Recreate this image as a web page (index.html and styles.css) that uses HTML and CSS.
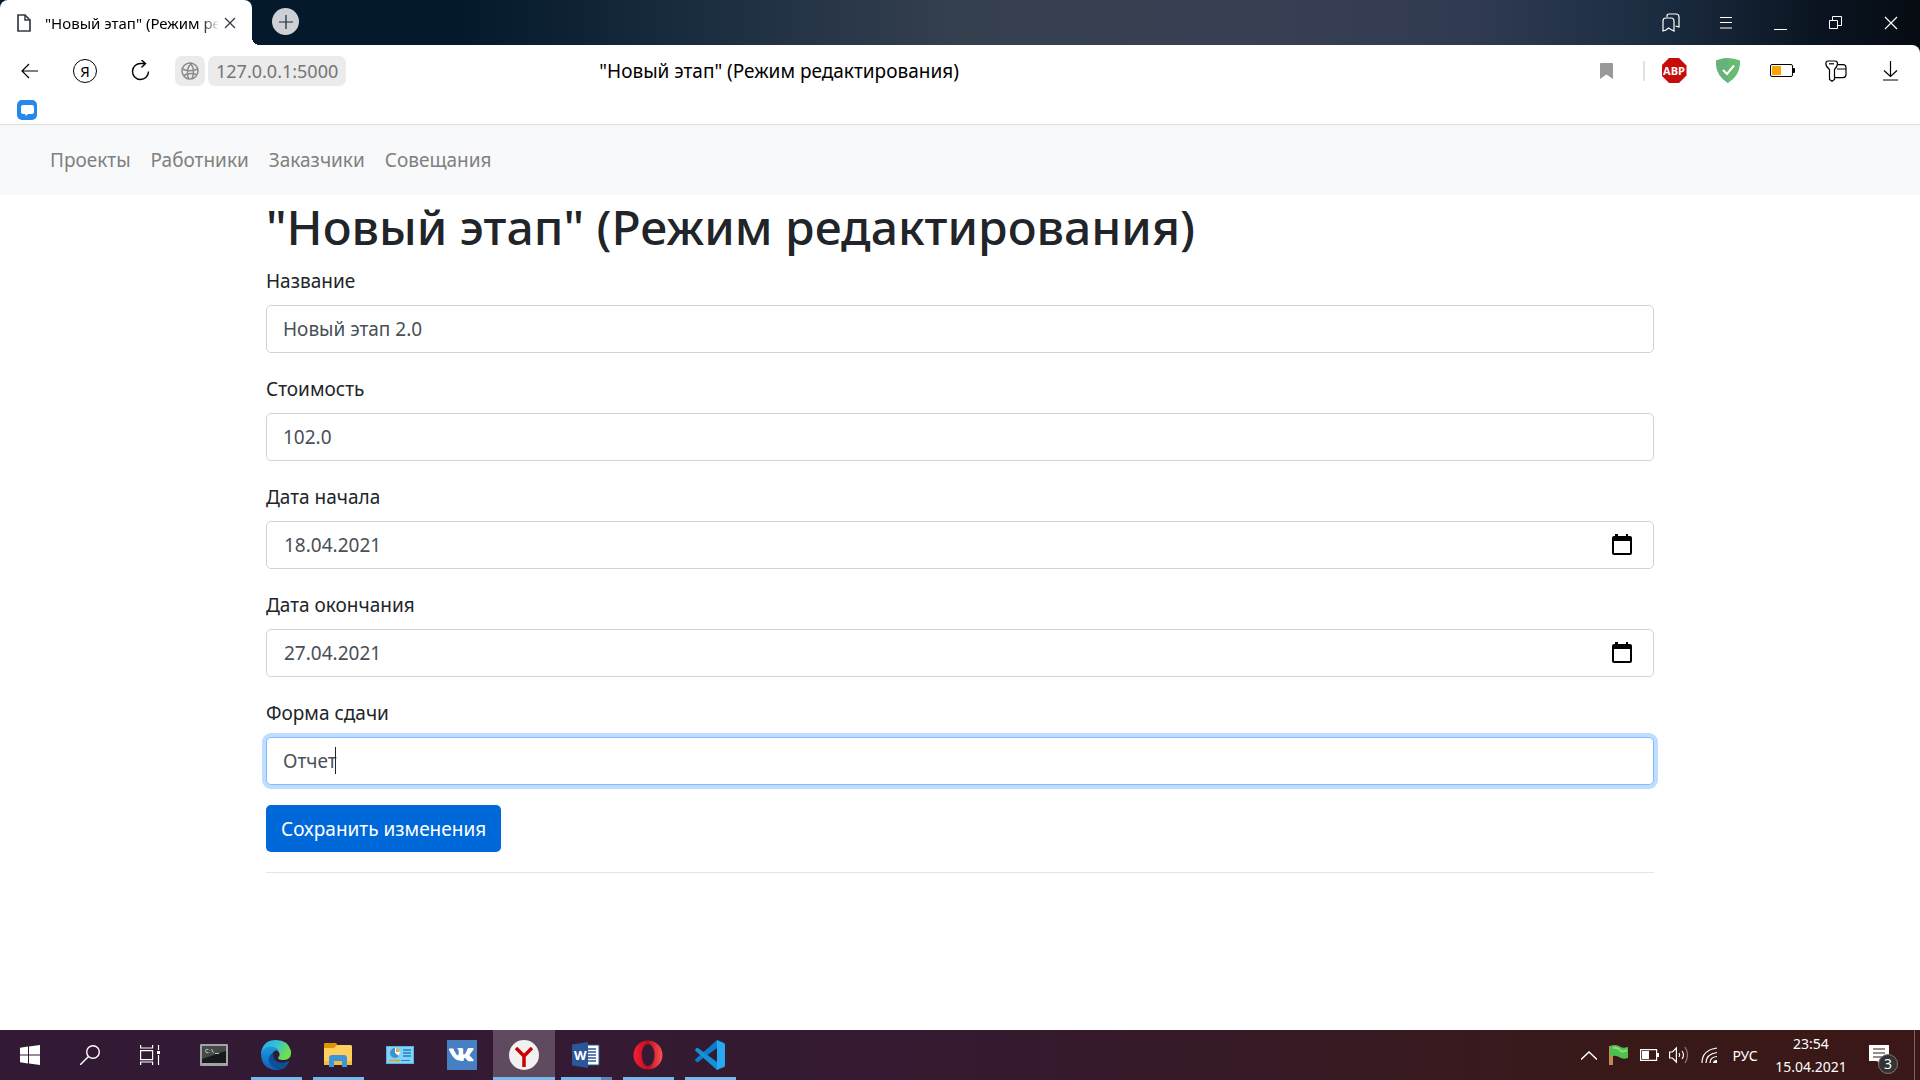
FILE: index.html
```html
<!DOCTYPE html>
<html lang="ru">
<head>
<meta charset="utf-8">
<title>"Новый этап" (Режим редактирования)</title>
<link rel="stylesheet" href="styles.css">
</head>
<body>
<header class="chrome">
  <div class="tabstrip">
    <div class="tab">
      <svg width="16" height="20" viewBox="0 0 16 20" fill="none" stroke="#343a4a" stroke-width="1.700"><path d="M2 2h7l5 5v11H2z"/><path d="M9 2v5h5" stroke-width="1.5"/></svg>
      <span class="tab-title">"Новый этап" (Режим редактирования)</span>
      <button class="icon-btn tab-close" aria-label="Закрыть вкладку"><svg width="12" height="12" viewBox="0 0 12 12" stroke="#333a48" stroke-width="1.3"><path d="M1 1l10 10M11 1L1 11"/></svg></button>
    </div>
    <span class="tab-corner"></span>
    <button class="icon-btn new-tab" aria-label="Новая вкладка"><svg width="14" height="14" viewBox="0 0 14 14" stroke="#1d2730" stroke-width="1.2"><path d="M7 0v14M0 7h14"/></svg></button>
    <div class="window-controls">
      <button class="icon-btn" aria-label="Коллекции"><svg width="18" height="20" viewBox="0 0 18 20" fill="none" stroke="#fff" stroke-width="1.2"><path d="M1 18V8q0-3 3-3h5q3 0 3 3v10l-3-1.500L6.500 15 4 17z"/><path d="M5 4V3q0-2 2-2h7q3 0 3 3v10l-3.500-1"/></svg></button>
      <button class="icon-btn" aria-label="Меню"><svg width="12" height="12" viewBox="0 0 12 12" stroke="#fff"><path d="M0 .5h12M0 5.500h12M0 11h12"/></svg></button>
      <button class="icon-btn" aria-label="Свернуть"><svg width="13" height="14" viewBox="0 0 13 14" stroke="#fff"><path d="M0 13.500h13"/></svg></button>
      <button class="icon-btn" aria-label="Восстановить"><svg width="13" height="13" viewBox="0 0 13 13" fill="none" stroke="#fff"><path d="M.5 4.500h8v8h-8zM3.500 4.500v-4h9v9h-4"/></svg></button>
      <button class="icon-btn" aria-label="Закрыть"><svg width="14" height="14" viewBox="0 0 14 14" stroke="#fff" stroke-width="1.2"><path d="M1 1l12 12M13 1L1 13"/></svg></button>
    </div>
  </div>
  <div class="panel">
    <div class="toolbar">
      <button class="icon-btn nav-btn" aria-label="Назад"><svg width="17" height="16" viewBox="0 0 17 16" fill="none" stroke="#000" stroke-width="1.2"><path d="M17 8H1M8 1L1 8l7 7"/></svg></button>
      <button class="icon-btn nav-btn" aria-label="Яндекс"><span class="ya-ring">Я</span></button>
      <button class="icon-btn nav-btn" aria-label="Обновить"><svg width="20" height="22" viewBox="0 0 20 22" fill="none" stroke="#000" stroke-width="1.4"><path d="M17.500 11.500a8 8 0 1 1-7.500-8h4M10.500 0l4 3.500-4 4"/></svg></button>
      <button class="icon-btn site" aria-label="О сайте"><svg width="18" height="18" viewBox="0 0 18 18" fill="none" stroke="#8a8a8a" stroke-width="1.500"><circle cx="9" cy="9" r="8"/><path d="M1.500 7q7 3.500 15.500 0M2.500 13.500q6-3.500 13-1M11 1Q4 6 7.500 17M9 1q6 6 2 16"/></svg></button>
      <span class="url">127.0.0.1:5000</span>
      <span class="page-title">"Новый этап" (Режим редактирования)</span>
      <button class="icon-btn mark" aria-label="В закладки"><svg width="13" height="16" viewBox="0 0 13 16" fill="#999"><path d="M1 0h11q1 0 1 1v15l-6.500-4.500L0 16V1q0-1 1-1z"/></svg></button>
      <div class="extensions">
        <button class="icon-btn" aria-label="Adblock Plus"><span class="abp">ABP</span></button>
        <button class="icon-btn" aria-label="Защита"><svg width="24" height="25" viewBox="0 0 24 25"><path d="M12 0q6 0 12 2.500Q25 17 12 25-1 17 0 2.500 6 0 12 0z" fill="#68bc71"/><path d="M12 0v25Q-1 17 0 2.500 6 0 12 0z" fill="#67b279"/><path d="M7 12l4 4 7-8.500" fill="none" stroke="#fff" stroke-width="2"/></svg></button>
        <button class="icon-btn" aria-label="Батарея"><svg width="25" height="13" viewBox="0 0 25 13"><rect x=".5" y=".5" width="22" height="12" rx="1.500" fill="none" stroke="#000"/><path d="M23 4h1q1 0 1 1v3q0 1-1 1h-1z"/><path d="M2 2h9v9H2z" fill="#ffa200"/></svg></button>
        <button class="icon-btn" aria-label="Пароли"><svg width="22" height="22" viewBox="0 0 22 22" fill="none" stroke="#000" stroke-width="1.200"><path d="M12 4.600h6q3 0 3 3v7q0 3-3 3h-8M12 9h9"/><path d="M3 1h7q2.500 0 2.500 2.500 0 3-3 6V19.500L7 21.300l-2.500-1.800V9.500Q1 7 .8 3.500 1 1 3 1z" fill="#fff"/><path d="M4 3.800h5"/></svg></button>
        <button class="icon-btn" aria-label="Загрузки"><svg width="15" height="20" viewBox="0 0 15 20" fill="none" stroke="#000" stroke-width="1.200"><path d="M7.500 0v15.500M1 9.500l6.500 6 6.500-6M0 19h15"/></svg></button>
      </div>
    </div>
    <div class="bookmarks">
      <a href="#" aria-label="Чат"><svg width="20" height="20" viewBox="0 0 20 20"><rect width="20" height="20" rx="5" fill="#2688eb"/><path d="M6 5h9q2 0 2 2v5q0 2-2 2h-4l-2.500 2.300V14H6q-2 0-2-2V7q0-2 2-2z" fill="#fff"/></svg></a>
    </div>
  </div>
</header>

<nav class="site-nav">
  <a href="#">Проекты</a>
  <a href="#">Работники</a>
  <a href="#">Заказчики</a>
  <a href="#">Совещания</a>
</nav>

<main class="container">
  <h1>"Новый этап" (Режим редактирования)</h1>
  <form>
    <div class="group">
      <label for="name">Название</label>
      <input class="control" id="name" type="text" value="Новый этап 2.0">
    </div>
    <div class="group">
      <label for="cost">Стоимость</label>
      <input class="control" id="cost" type="text" value="102.0">
    </div>
    <div class="group">
      <label for="start">Дата начала</label>
      <div class="control date">
        <input id="start" type="text" value="18.04.2021">
        <button class="icon-btn" type="button" aria-label="Выбрать дату начала"><svg width="20" height="22" viewBox="0 0 20 22"><path d="M3 0h3v2h8V0h2v2h2q2 0 2 2v15q0 2-2 2H2q-2 0-2-2V4q0-2 2-2h1zM2 7v12h16V7z"/></svg></button>
      </div>
    </div>
    <div class="group">
      <label for="end">Дата окончания</label>
      <div class="control date">
        <input id="end" type="text" value="27.04.2021">
        <button class="icon-btn" type="button" aria-label="Выбрать дату окончания"><svg width="20" height="22" viewBox="0 0 20 22"><path d="M3 0h3v2h8V0h2v2h2q2 0 2 2v15q0 2-2 2H2q-2 0-2-2V4q0-2 2-2h1zM2 7v12h16V7z"/></svg></button>
      </div>
    </div>
    <div class="group">
      <label for="form">Форма сдачи</label>
      <div class="caret-field">
        <input class="control active" id="form" type="text" value="Отчет">
        <span class="caret"></span>
      </div>
    </div>
    <button class="submit" type="submit">Сохранить изменения</button>
  </form>
  <hr>
</main>

<footer class="taskbar">
  <button class="icon-btn sys" aria-label="Пуск"><svg width="20" height="20" viewBox="0 0 20 20" fill="#fff"><path d="M0 2.800L8 1.600V9.500H0zM9 1.500L20 0v9.500H9zM0 10.500h8v7.900l-8-1.200zM9 10.500h11V20L9 18.500z"/></svg></button>
  <button class="icon-btn sys" aria-label="Поиск"><svg width="20" height="20" viewBox="0 0 20 20" fill="none" stroke="#fff" stroke-width="1.400"><circle cx="13" cy="7" r="6.300"/><path d="M8.500 11.500L0 20"/></svg></button>
  <button class="icon-btn sys tasks" aria-label="Представление задач"><svg width="20" height="20" viewBox="0 0 20 20" fill="none" stroke="#fff" stroke-width="1.200"><path d="M.6 0v3h12V0M.6 5.600h12v9H.6zM.6 20v-3h12v3M18.500 0v5M18.500 10v10"/><path d="M17 6h3v3h-3z" fill="#fff" stroke="none"/></svg></button>
  <button class="icon-btn app" aria-label="Командная строка"><svg width="28" height="22" viewBox="0 0 28 22"><rect width="28" height="22" rx="1" fill="#a3a3a3"/><path d="M2 2h24v17H2z" fill="#161819"/><path d="M2 2h24v5L2 15z" fill="#45494b"/><path d="M8.500 5.500q-3-1-3 1.500t3 1.500M10 6v.5M10 8v.5M11.500 5l2 4M15 9.500h4" fill="none" stroke="#bbb"/><path d="M22 20h2" stroke="#4ae"/></svg></button>
  <button class="icon-btn app open" aria-label="Microsoft Edge"><svg width="30" height="30" viewBox="0 0 30 30">
    <defs><linearGradient id="eg" x1="0" y1="0" x2="1" y2=".4"><stop offset="0" stop-color="#2aa9e0"/><stop offset=".5" stop-color="#34c1da"/><stop offset="1" stop-color="#6ee04e"/></linearGradient><linearGradient id="eb" x1="0" y1="0" x2="0" y2="1"><stop offset="0" stop-color="#1c9be0"/><stop offset="1" stop-color="#0f5fb5"/></linearGradient></defs>
    <path d="M0 13Q2 0 15 0q12 0 15 11 1 9-8 9-5 0-5-2.500 2-1.500 1.500-4Q17 9 11 8 4 8 0 15z" fill="url(#eg)"/>
    <path d="M0 13Q3 6 10 6.500q6 .5 8 4-4-1-6 2-3 7 3 11 6 3 13-2-4 9-13 8.500Q0 29 0 13z" fill="url(#eb)"/>
    <path d="M12.500 12Q4 18 10 25q3 4 7 4.800 7-1 11-8.300.3-1-1-.6Q18 25 14 20q-3-4-1.500-8z" fill="#0c4f9a"/></svg></button>
  <button class="icon-btn app open" aria-label="Проводник"><svg width="28" height="24" viewBox="0 0 28 24"><path d="M1 0h11l2 3v7H0V1q0-1 1-1z" fill="#dd9500"/><path d="M0 5h10l3-3h14l1 1v19H0z" fill="#ffd15c"/><path d="M0 18h28v4H0z" fill="#f5bd3d"/><path d="M5 24V15q0-3 3-3h12q3 0 3 3v9h-5v-6h-8v6z" fill="#3d96dc"/></svg></button>
  <button class="icon-btn app" aria-label="Панель управления"><svg width="28" height="18" viewBox="0 0 28 18"><path d="M0 0h28v18H0z" fill="#55b4e8"/><path d="M1 1h26v16H1z" fill="#83d3f7"/><circle cx="9" cy="7" r="5" fill="#3d91d2"/><path d="M9 7V2a5 5 0 0 1 4 8z" fill="#fff"/><path d="M10 6V2.500A4 4 0 0 1 13.500 6z" fill="#f6a82c"/><path d="M17 4h8M17 7h8M17 10h8" stroke="#2382c5" stroke-width="1.500"/><path d="M3 14.500h11" stroke="#f39c12" stroke-width="1.500"/><path d="M15 14.500h9" stroke="#2382c5"/></svg></button>
  <button class="icon-btn app" aria-label="ВКонтакте"><svg width="30" height="30" viewBox="0 0 30 30"><path d="M0 0h30v30H0z" fill="#4680c2"/><path d="M14.600 21h1.300s.4 0 .6-.3c.2-.2.200-.5.200-.5s0-2 .9-2.200c.9-.3 2 1.900 3.200 2.700.9.600 1.600.5 1.600.5h3.200s1.700-.1.900-1.400c-.1-.1-.5-1-2.500-2.800-2.100-1.900-1.800-1.600.7-4.900 1.500-2 2.100-3.200 1.900-3.700-.2-.5-1.300-.4-1.300-.4l-3.600.1s-.5-.1-.7.200c-.2.200-.5.800-.5.800s-.6 1.500-1.300 2.800c-1.600 2.700-2.200 2.800-2.500 2.700-.6-.4-.5-1.600-.5-2.400 0-2.700.4-3.800-.8-4-.4-.1-.7-.2-1.700-.2-1.300 0-2.400 0-3 .3-.4.200-.8.700-.6.700.3 0 .9.200 1.200.6.4.6.4 1.800.4 1.800s.2 3.500-.6 3.900c-.5.300-1.300-.3-2.900-3-.8-1.400-1.400-2.900-1.400-2.900L6.300 8.600H2.500s-.9.100-.5 1.100c0 0 2.900 6.300 5.700 8.900 3 2.600 6.900 2.400 6.900 2.400z" fill="#fff"/></svg></button>
  <button class="icon-btn app current" aria-label="Яндекс.Браузер"><svg width="30" height="30" viewBox="0 0 30 30"><circle cx="15" cy="15" r="15" fill="#f1f1f1"/><path d="M7 8l8 8v11M15 16l8-8" fill="none" stroke="#c00" stroke-width="3.500"/></svg></button>
  <button class="icon-btn app open stacked" aria-label="Word"><svg width="28" height="28" viewBox="0 0 28 28"><path d="M15 4h12v20H15z" fill="#fff" stroke="#2b579a"/><path d="M16 8h8M16 11h8M16 14h8M16 17h8M16 20h8" stroke="#2b579a" stroke-width="1.400"/><path d="M0 3.500L16 1v26L0 24.500z" fill="#2b579a"/><text x="2" y="19" class="word-mark">W</text></svg></button>
  <button class="icon-btn app open" aria-label="Opera"><svg width="30" height="30" viewBox="0 0 30 30"><defs><linearGradient id="op" x1="0" x2="1"><stop offset="0" stop-color="#fa1e35"/><stop offset=".5" stop-color="#b80f22"/><stop offset="1" stop-color="#ff5350"/></linearGradient></defs><path fill-rule="evenodd" fill="url(#op)" d="M15 .5a14.500 14.500 0 1 1 0 29 14.500 14.500 0 1 1 0-29zM15 4c-4 0-6.200 5-6.200 11S11 26 15 26s6.500-5 6.500-11S19 4 15 4z"/></svg></button>
  <button class="icon-btn app open" aria-label="Visual Studio Code"><svg width="30" height="30" viewBox="0 0 30 30"><path d="M22 8L3 22q-.8.500-1.500 0L.3 20.600q-.6-.8 0-1.400L22 0z" fill="#0b7ec9"/><path d="M22 22L3 8q-.8-.5-1.500 0L.3 9.400q-.6.800 0 1.400L22 30z" fill="#1390d8"/><path d="M22 0l7 3q1 .6 1 1.500v21q0 1-1 1.500l-7 3z" fill="#29a8f2"/></svg></button>

  <div class="tray">
    <button class="icon-btn" aria-label="Скрытые значки"><svg width="16" height="9" viewBox="0 0 16 9" fill="none" stroke="#fff" stroke-width="1.500"><path d="M0 8.500l8-7.500 8 7.500"/></svg></button>
    <button class="icon-btn" aria-label="Флаг"><svg width="20" height="20" viewBox="0 0 20 20"><path d="M0 1h4v19H0z" fill="#c08a50"/><path d="M1 1q5-2 9 0 3 3 9 1v11q-5 2-9-1-4-2-6-1H1z" fill="#4fc04f"/><path d="M4 3q5-1 7 2t7 0" stroke="#8ae07e" stroke-width="2" fill="none"/></svg></button>
    <button class="icon-btn" aria-label="Заряд"><svg width="19" height="12" viewBox="0 0 19 12"><path d="M.6.600h16v10.800H.6z" fill="none" stroke="#fff" stroke-width="1.200"/><path d="M2 2h7v8H2zM17 4h2v4h-2z" fill="#fff"/></svg></button>
    <button class="icon-btn" aria-label="Громкость"><svg width="20" height="18" viewBox="0 0 20 18" fill="none" stroke="#fff" stroke-width="1.200"><path d="M.6 6h2.800l4-4v14l-4-4H.6z"/><path d="M10 7q1.500 2 0 4M13 5q3 4 0 8"/><path d="M16 1q5 8 0 16" stroke="#937c7d"/></svg></button>
    <button class="icon-btn" aria-label="Сеть"><svg width="17" height="17" viewBox="0 0 17 17" fill="none" stroke="#fff" stroke-width="1.200"><path d="M1 16Q1 3 16 1M5 16Q5 7 16 5.500M9 16q0-6 7-6.500" /><path d="M12 16q0-3 4-3v3z" fill="#fff" stroke="none"/></svg></button>
    <button class="icon-btn lang">РУС</button>
    <button class="icon-btn clock"><span>23:54</span><span>15.04.2021</span></button>
    <button class="icon-btn notes" aria-label="Уведомления: 3"><svg width="20" height="21" viewBox="0 0 20 21"><path d="M0 0h20v16h-7v5l-5-5H0z" fill="#fff"/><path d="M4 4h12M4 8h12M4 12h12" stroke="#391b1b" stroke-width="1.200"/></svg><span class="badge">3</span></button>
    <span class="desktop-edge"></span>
  </div>
</footer>
</body>
</html>
```
FILE: styles.css
```css
* { box-sizing: border-box; }

body {
  margin: 0;
  min-height: 100vh;
  display: flex;
  flex-direction: column;
  background: #fff;
  color: #212529;
  font-family: "Noto Sans", "Open Sans", sans-serif;
  font-size: 19px;
  line-height: 30px;
}

button, input { font: inherit; }

.icon-btn {
  display: flex;
  align-items: center;
  justify-content: center;
  padding: 0;
  border: 0;
  background: none;
  color: inherit;
  flex: none;
}

svg { display: block; flex: none; }

/* Browser window */
.chrome {
  background: linear-gradient(90deg, #04192b 0, #04192b 24%, #1a2c40 36%, #35404f 50%, #3a4054 65%, #2f3a52 77%, #1c2d42 86%, #0a1420 95%, #060b12 100%);
}

.tabstrip { display: flex; align-items: center; height: 45px; }

.tab {
  align-self: stretch;
  display: flex;
  align-items: center;
  width: 252px;
  padding: 0 16px;
  background: #fff;
  border-radius: 8px 8px 0 0;
}

.tab-title {
  flex: 1;
  margin-left: 13px;
  overflow: hidden;
  white-space: nowrap;
  color: #000;
  font-size: 15px;
  mask-image: linear-gradient(90deg, #000 90%, transparent);
}

.tab-close { margin-left: 5px; }

.tab-corner {
  align-self: flex-end;
  width: 8px;
  height: 8px;
  background: radial-gradient(circle at 100% 0, transparent 8px, #fff 8px);
}

.new-tab {
  width: 27px;
  height: 27px;
  margin: 0 0 2px 12px;
  border-radius: 50%;
  background: #cdd1d5;
}

.window-controls { display: flex; margin-left: auto; padding-right: 2px; }
.window-controls .icon-btn { width: 55px; height: 45px; }

.panel {
  background: #fff;
  border-bottom: 1px solid #dcdcdc;
  border-radius: 0 8px 0 0;
}

.toolbar { display: flex; align-items: center; height: 51px; padding-left: 1px; color: #000; }

.nav-btn { width: 56px; height: 40px; }

.ya-ring {
  width: 24px;
  height: 24px;
  border: 1px solid #000;
  border-radius: 50%;
  font-size: 15px;
  line-height: 22px;
}

.site { width: 30px; height: 30px; margin-left: 6px; border-radius: 7px; background: #ebebeb; }

.url {
  margin-left: 3px;
  padding: 0 8px;
  border-radius: 7px;
  background: #ebebeb;
  color: #757575;
  font-size: 18px;
}

.page-title { flex: 1; padding-left: 253px; white-space: nowrap; }

.mark { width: 40px; height: 40px; margin-right: 17px; }

.extensions {
  display: flex;
  padding: 0 3px 0 4px;
  background: linear-gradient(#e2e2e2, #e2e2e2) 0 50% / 2px 20px no-repeat;
}
.extensions .icon-btn { width: 54px; height: 40px; }

.abp {
  width: 25px;
  height: 25px;
  background: #c70d0c;
  color: #fff;
  clip-path: polygon(30% 0, 70% 0, 100% 30%, 100% 70%, 70% 100%, 30% 100%, 0 70%, 0 30%);
  font-family: "Open Sans", sans-serif;
  font-size: 11px;
  font-weight: 700;
  line-height: 25px;
}

.bookmarks { height: 28px; padding: 4px 17px; line-height: 20px; }
.bookmarks a { display: block; width: 20px; }

/* Site navigation */
.site-nav {
  display: flex;
  gap: 20px;
  padding: 20px 50px;
  background: #f8f9fa;
}

.site-nav a { color: #808080; text-decoration: none; }

/* Edit form */
.container { flex: 1; width: 100%; max-width: 1428px; margin: 0 auto; padding: 0 20px; }

h1 { margin: 0; font-size: 48px; font-weight: 500; line-height: 64px; }

.group { margin-bottom: 20px; }

label { display: block; padding: 7px 0 9px; }
.group + .group label { padding-top: 0; }
.group + .group { margin-top: 21px; }
.group { margin-bottom: 20px; }

.control {
  display: block;
  width: 100%;
  height: 48px;
  padding: 0 16px;
  border: 1px solid #ced4da;
  border-radius: 5px;
  outline: 0;
  background: #fff;
  color: #495057;
}

.date { display: flex; padding: 0 21px 0 17px; }
.date input { flex: 1; min-width: 0; padding: 0; border: 0; outline: 0; background: none; color: inherit; }

.active { border-color: #80bdff; box-shadow: 0 0 0 4px #bfdeff; }

.caret-field { position: relative; }
.caret { position: absolute; top: 10px; left: 69px; width: 1px; height: 27px; background: #212529; }

.submit {
  display: block;
  height: 47px;
  padding: 0 15px;
  border: 0;
  border-radius: 5px;
  background: #0069d9;
  color: #fff;
}

hr { margin: 20px 0; border: 0; border-top: 1px solid #e5e5e5; }

/* Taskbar */
.taskbar {
  display: flex;
  height: 50px;
  background: linear-gradient(90deg, #321a35, #351a30 50%, #391918 85%, #3a1818);
  color: #fff;
}

.sys { width: 60px; }
.tasks { margin-right: 3px; }
.app { width: 62px; }

.open { background: linear-gradient(#76b9ed, #76b9ed) 50% 100% / 51px 3px no-repeat; }
.stacked { background-image: linear-gradient(90deg, #76b9ed 40px, #5a86b0 40px); }
.current { background: linear-gradient(#76b9ed, #76b9ed) 0 100% / 100% 3px no-repeat #5f4a60; }

.word-mark { fill: #fff; font: 700 13px "Open Sans", sans-serif; }

.tray { display: flex; margin-left: auto; font-size: 14px; line-height: 23px; }
.tray .icon-btn { width: 30px; }
.tray .lang { width: 42px; }
.tray .clock { flex-direction: column; width: 90px; }
.tray .notes { position: relative; width: 46px; }

.badge {
  position: absolute;
  left: 22px;
  top: 24px;
  width: 20px;
  height: 20px;
  border: 1px solid #777;
  border-radius: 50%;
  background: #333;
  font-size: 14px;
  line-height: 18px;
}

.desktop-edge { width: 1px; margin: 0 5px 0 12px; background: #7a6464; }
```
